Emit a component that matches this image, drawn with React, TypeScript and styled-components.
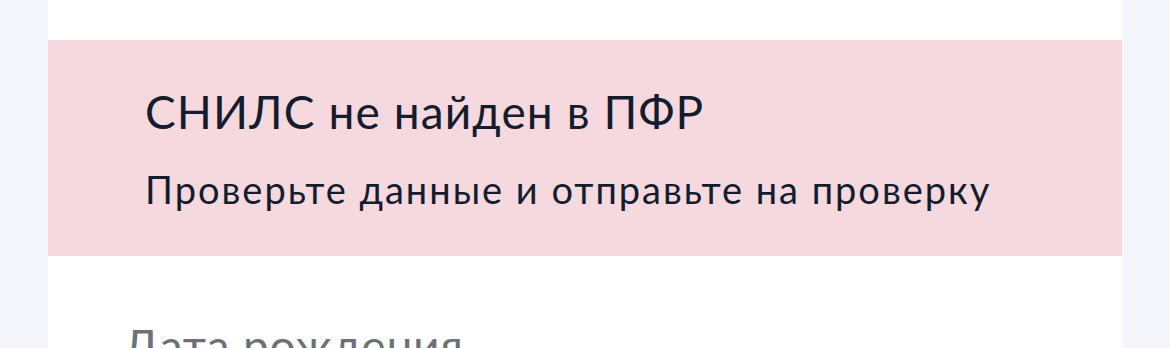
import React from "react";
import styled, { createGlobalStyle } from "styled-components";

const Global = createGlobalStyle`
  html, body { margin: 0; padding: 0; background: #f5f6fb; }
  body { font-family: Lato, "Noto Sans", sans-serif; -webkit-font-smoothing: antialiased; }
  #root { height: 348px; overflow: hidden; }
`;

const Page = styled.div`
  display: flex;
  padding-left: 48px;
  height: 348px;
`;

const Card = styled.div`
  width: 1074px;
  background: #ffffff;
  padding-top: 40px;
  display: flex;
  flex-direction: column;
`;

const Banner = styled.div`
  background: #f6d9de;
  padding: 44px 97px 44px;
  display: flex;
  flex-direction: column;
`;

const Title = styled.div`
  font-size: 46px;
  line-height: 55px;
  letter-spacing: 1.1px;
  color: #141c2e;
  margin-bottom: 27px;
`;

const Subtitle = styled.div`
  font-size: 38px;
  line-height: 46px;
  letter-spacing: 2px;
  color: #141c2e;
`;

const Field = styled.div`
  padding: 62px 77px 0 75px;
`;

const Label = styled.div`
  font-size: 46px;
  line-height: 55px;
  letter-spacing: 0.8px;
  color: #6b7079;
`;

export default function App() {
  return (
    <>
      <Global />
      <Page>
        <Card>
          <Banner>
            <Title>СНИЛС не найден в ПФР</Title>
            <Subtitle>Проверьте данные и отправьте на проверку</Subtitle>
          </Banner>
          <Field>
            <Label>Дата рождения</Label>
          </Field>
        </Card>
      </Page>
    </>
  );
}
